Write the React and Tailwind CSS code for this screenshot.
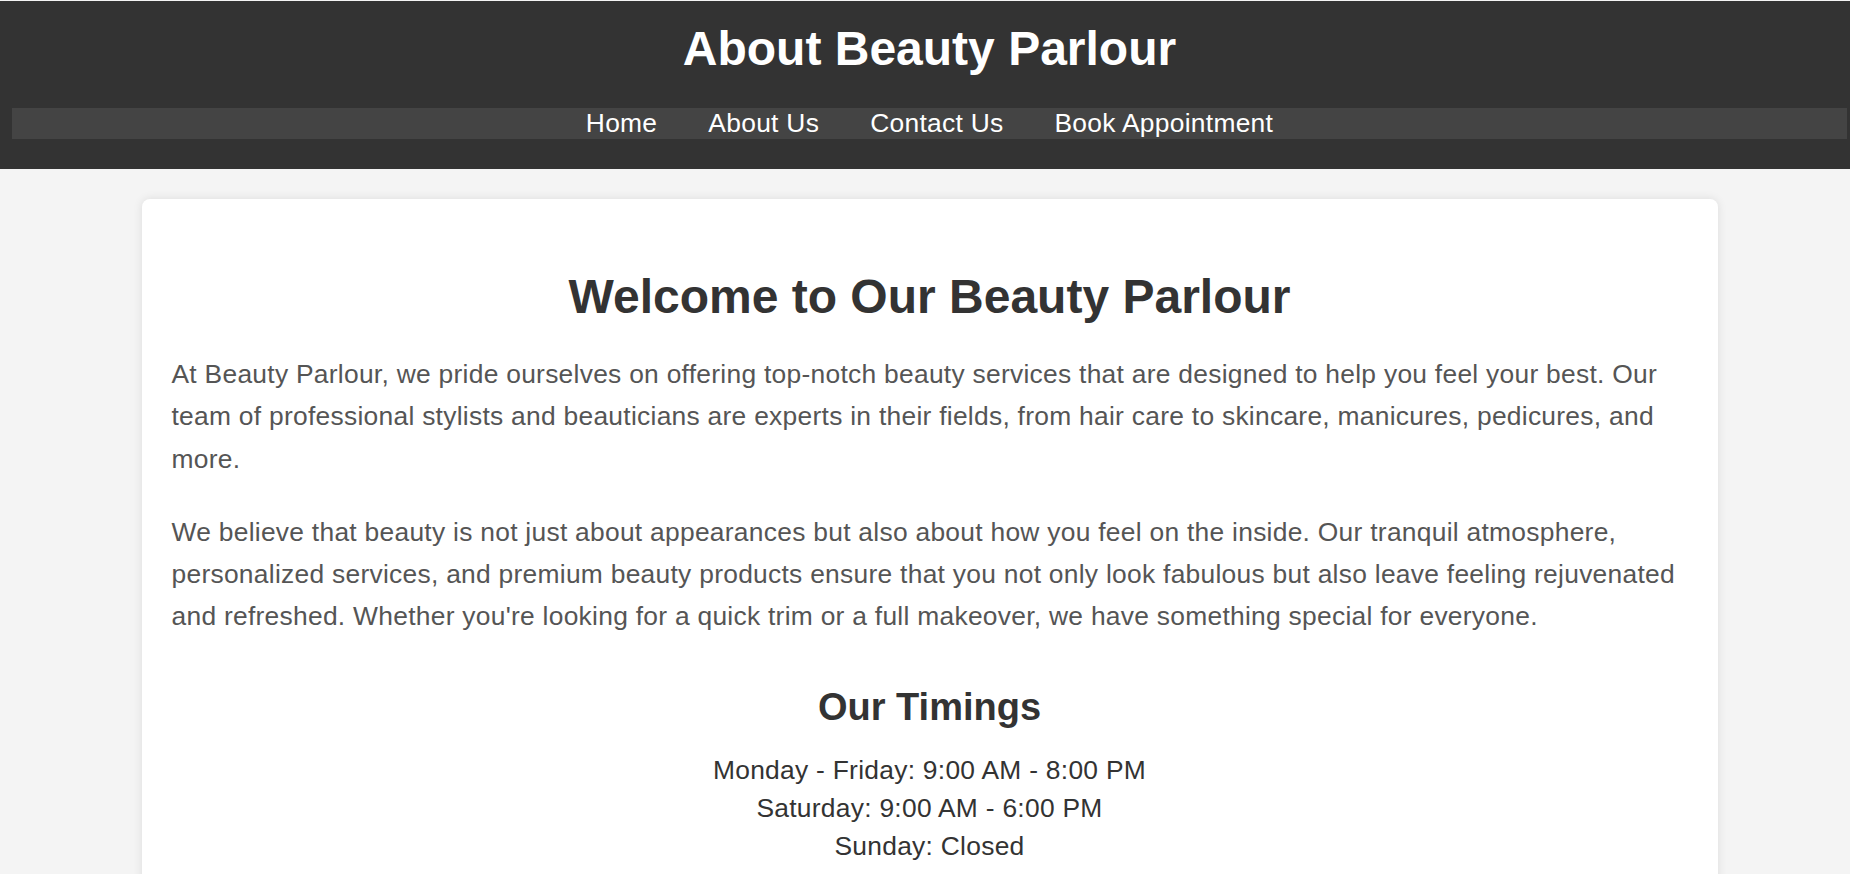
export default function App() {
  const links = ['Home', 'About Us', 'Contact Us', 'Book Appointment']

  return (
    <div className="min-h-screen overflow-hidden bg-[#f4f4f4] font-['Liberation_Sans',Arial,sans-serif]">
      <div className="w-[1859px] pt-px">
        <header className="bg-[#333] px-3 pt-5 pb-[30px] text-center text-white">
          <h1 className="mb-8 text-[48px] font-bold leading-[55px]">About Beauty Parlour</h1>
          <nav className="flex h-[31px] justify-center gap-[51px] bg-[#444] text-[26.4px] leading-[31px] tracking-[0.28px]">
            {links.map((link) => (
              <a key={link} href="#" className="text-white">
                {link}
              </a>
            ))}
          </nav>
        </header>

        <main className="mx-auto mt-[30px] w-[1576px] rounded-lg bg-white px-[30px] pt-[70px] pb-10 shadow-[0_0_10px_rgba(0,0,0,0.1)]">
          <h2 className="mb-[29px] text-center text-[48px] font-bold leading-[55px] text-[#333]">
            Welcome to Our Beauty Parlour
          </h2>
          <p className="mb-[31px] text-[26.4px] leading-[1.6] tracking-[0.27px] text-[#555]">
            At Beauty Parlour, we pride ourselves on offering top-notch beauty services that are designed to help
            you feel your best. Our team of professional stylists and beauticians are experts in their fields, from
            hair care to skincare, manicures, pedicures, and more.
          </p>
          <p className="text-[26.4px] leading-[1.6] tracking-[0.27px] text-[#555]">
            We believe that beauty is not just about appearances but also about how you feel on the inside. Our
            tranquil atmosphere, personalized services, and premium beauty products ensure that you not only look
            fabulous but also leave feeling rejuvenated and refreshed. Whether you're looking for a quick trim or a
            full makeover, we have something special for everyone.
          </p>

          <section className="text-center text-[#333]">
            <h3 className="mt-[47px] mb-[22px] text-[38px] font-bold leading-[44px]">Our Timings</h3>
            <p className="text-[26.4px] leading-[38px] tracking-[0.27px]">Monday - Friday: 9:00 AM - 8:00 PM</p>
            <p className="text-[26.4px] leading-[38px] tracking-[0.27px]">Saturday: 9:00 AM - 6:00 PM</p>
            <p className="text-[26.4px] leading-[38px] tracking-[0.27px]">Sunday: Closed</p>
          </section>
        </main>
      </div>
    </div>
  )
}
